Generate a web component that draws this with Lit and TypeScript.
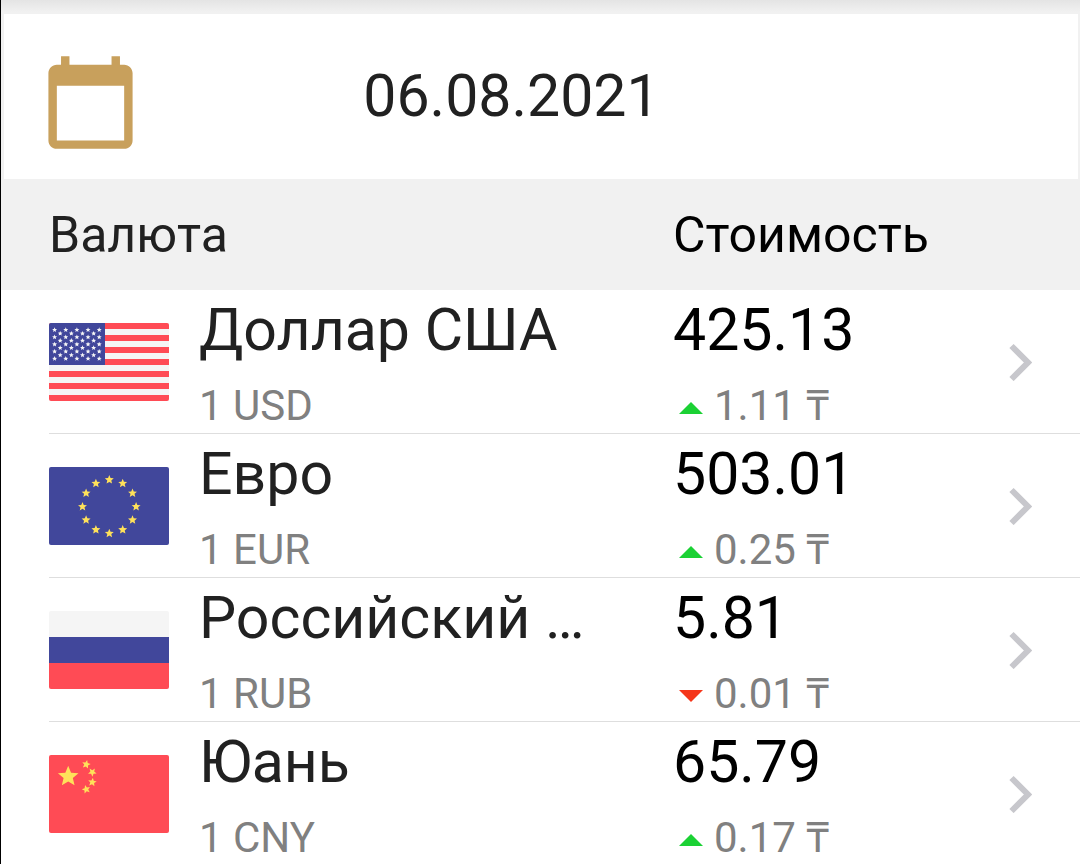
import { LitElement, html, svg, css } from "lit";
import { customElement, property, state } from "lit/decorators.js";

type FlagCode = "USD" | "EUR" | "RUB" | "CNY";

interface Rate {
  code: FlagCode;
  name: string;
  price: string;
  change: string;
  rising: boolean;
}

/** Points of a five-pointed star around (cx, cy), turned by `turn` degrees. */
function starPoints(cx: number, cy: number, r: number, turn = 0): string {
  const points: string[] = [];
  for (let i = 0; i < 10; i++) {
    const radius = i % 2 === 0 ? r : r * 0.45;
    const angle = ((i * 36 - 90 + turn) * Math.PI) / 180;
    points.push(
      `${(cx + radius * Math.cos(angle)).toFixed(2)},${(cy + radius * Math.sin(angle)).toFixed(2)}`,
    );
  }
  return points.join(" ");
}

const star = (cx: number, cy: number, r: number, fill: string, turn = 0) =>
  svg`<polygon points=${starPoints(cx, cy, r, turn)} fill=${fill}></polygon>`;

const RED = "#ff4b55";
const BLUE = "#41479b";
const PALE = "#f5f5f5";
const YELLOW = "#ffe15a";

function usFlag() {
  const stripes = [0, 1, 2, 3, 4, 5, 6].map(
    (i) => svg`<rect y=${i * 12} width="120" height="6" fill=${RED}></rect>`,
  );
  const stars = [];
  for (let row = 0; row < 9; row++) {
    const wide = row % 2 === 0;
    for (let col = 0; col < (wide ? 5 : 4); col++) {
      stars.push(star((wide ? 5.6 : 11.2) + col * 11.15, 6.9 + row * 3.6, 2.6, PALE));
    }
  }
  return svg`
    <rect width="120" height="78" fill=${PALE}></rect>
    ${stripes}
    <rect width="56" height="42" fill=${BLUE}></rect>
    ${stars}`;
}

function euFlag() {
  const stars = Array.from({ length: 12 }, (_, i) => {
    const angle = (i * 30 * Math.PI) / 180;
    return star(60.3 + 26.8 * Math.sin(angle), 39.6 - 26.8 * Math.cos(angle), 4.7, YELLOW);
  });
  return svg`<rect width="120" height="78" fill=${BLUE}></rect>${stars}`;
}

function ruFlag() {
  return svg`
    <rect width="120" height="26" fill=${PALE}></rect>
    <rect y="26" width="120" height="26" fill=${BLUE}></rect>
    <rect y="52" width="120" height="26" fill=${RED}></rect>`;
}

function cnFlag() {
  return svg`
    <rect width="120" height="78" fill=${RED}></rect>
    ${star(19.2, 21.6, 10.8, YELLOW)}
    ${star(37.2, 9.4, 4.5, YELLOW, 12)}
    ${star(43.3, 17.2, 4.5, YELLOW, 35)}
    ${star(43.3, 27.2, 4.5, YELLOW, 8)}
    ${star(37.2, 34.4, 4.5, YELLOW, -15)}`;
}

const FLAGS: Record<FlagCode, () => unknown> = {
  USD: usFlag,
  EUR: euFlag,
  RUB: ruFlag,
  CNY: cnFlag,
};

@customElement("currency-flag")
export class CurrencyFlag extends LitElement {
  static styles = css`
    :host {
      display: block;
    }
    .flag {
      display: block;
      width: 120px;
      height: 78px;
      border-radius: 2px;
    }
  `;

  @property() code: FlagCode = "USD";

  render() {
    return html`<svg class="flag" viewBox="0 0 120 78" aria-hidden="true">${FLAGS[this.code]()}</svg>`;
  }
}

@customElement("app-root")
export class AppRoot extends LitElement {
  static styles = css`
    :host {
      display: block;
      box-sizing: border-box;
      height: 100vh;
      overflow-y: auto;
      scrollbar-width: none;
      border-left: 1px solid #000;
      background: #fff;
      color: #212121;
      font-family: Roboto, "Noto Sans", sans-serif;
    }
    .top {
      padding: 14px 2px 0 3px;
      background: linear-gradient(#e4e4e4, #f1f1f1 12px);
    }
    .date {
      display: grid;
      grid-template-columns: 101px 1fr;
      align-items: center;
      box-sizing: border-box;
      width: 100%;
      min-height: 165px;
      margin: 0;
      padding: 0 196px 2px 36px;
      border: 0;
      background: #fff;
      color: inherit;
      font: inherit;
      font-size: 59px;
      line-height: 80px;
      text-align: center;
      cursor: pointer;
    }
    .calendar {
      display: block;
      width: 101px;
      height: 101px;
      margin-top: 14px;
      fill: #c8a05c;
    }
    .rates,
    .head,
    .body {
      display: block;
    }
    .columns {
      display: grid;
      grid-template-columns: minmax(0, 1fr) 359px;
      align-items: center;
      min-height: 111px;
      padding: 0 48px;
      background: #f1f1f1;
      font-size: 50px;
      line-height: 60px;
    }
    .columns th {
      padding: 0;
      font-weight: 400;
      text-align: left;
    }
    .columns .cost {
      color: #000;
    }
    .row {
      display: grid;
      grid-template-columns: 150px minmax(0, 1fr) 335px 24px;
      align-items: center;
      box-sizing: border-box;
      min-height: 144px;
      margin-left: 48px;
      padding-right: 48px;
      border-bottom: 1px solid #dedede;
    }
    .row td {
      padding: 0;
    }
    .row .currency,
    .row .cost {
      align-self: start;
    }
    .row .currency {
      padding-right: 72px;
    }
    .name,
    .price {
      overflow: hidden;
      font-size: 59px;
      line-height: 80px;
      text-overflow: ellipsis;
      white-space: nowrap;
    }
    .price {
      color: #000;
    }
    .unit,
    .change {
      margin-top: 10px;
      color: #808080;
      font-size: 42px;
      line-height: 52px;
      white-space: nowrap;
    }
    .change {
      display: flex;
      align-items: center;
      gap: 11px;
      padding-left: 6px;
    }
    .arrow {
      width: 24px;
      height: 12px;
      margin-top: 4px;
      fill: #1bd134;
    }
    .arrow.falling {
      fill: #f5361a;
    }
    .open {
      display: block;
      margin: 0;
      padding: 0;
      border: 0;
      background: none;
      cursor: pointer;
    }
    .chevron {
      display: block;
      width: 24px;
      height: 39px;
      fill: none;
      stroke: #c7c7cc;
      stroke-width: 6;
    }
  `;

  @state() private date = "06.08.2021";

  @state() private rates: Rate[] = [
    { code: "USD", name: "Доллар США", price: "425.13", change: "1.11", rising: true },
    { code: "EUR", name: "Евро", price: "503.01", change: "0.25", rising: true },
    { code: "RUB", name: "Российский рубль", price: "5.81", change: "0.01", rising: false },
    { code: "CNY", name: "Юань", price: "65.79", change: "0.17", rising: true },
  ];

  private renderRow(rate: Rate) {
    return html`
      <tr class="row">
        <td><currency-flag code=${rate.code}></currency-flag></td>
        <td class="currency">
          <div class="name">${rate.name}</div>
          <div class="unit">1 ${rate.code}</div>
        </td>
        <td class="cost">
          <div class="price">${rate.price}</div>
          <div class="change">
            <svg class="arrow ${rate.rising ? "" : "falling"}" viewBox="0 0 24 12" aria-hidden="true">
              <path d=${rate.rising ? "M0 12 12 0l12 12z" : "M0 0h24L12 12z"}></path>
            </svg>
            <span>${rate.change} ₸</span>
          </div>
        </td>
        <td>
          <button class="open" type="button" aria-label=${rate.name}>
            <svg class="chevron" viewBox="0 0 24 39" aria-hidden="true">
              <path d="M3.500 4l16.500 16.500L3.500 37"></path>
            </svg>
          </button>
        </td>
      </tr>
    `;
  }

  render() {
    return html`
      <div class="top">
        <button class="date" type="button">
          <svg class="calendar" viewBox="0 0 24 24" aria-hidden="true">
            <path
              d="M20 3h-1V1h-2v2H7V1H5v2H4c-1.100 0-2 .9-2 2v16c0 1.100.9 2 2 2h16c1.100 0 2-.9 2-2V5c0-1.100-.9-2-2-2zm0 18H4V8h16v13z"
            ></path>
          </svg>
          <span>${this.date}</span>
        </button>
      </div>
      <table class="rates">
        <thead class="head">
          <tr class="columns">
            <th scope="col">Валюта</th>
            <th class="cost" scope="col">Стоимость</th>
          </tr>
        </thead>
        <tbody class="body">
          ${this.rates.map((rate) => this.renderRow(rate))}
        </tbody>
      </table>
    `;
  }
}
